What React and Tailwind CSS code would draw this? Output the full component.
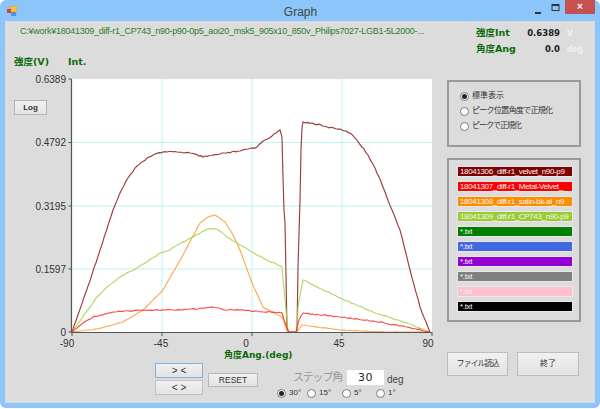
import React from 'react'

const sans = 'font-["Liberation_Sans","Noto_Sans_CJK_JP",sans-serif]'

// curves in page pixels, plot runs x 72-432 and y 79-332
const curves = [
  { color: '#8b1a1a', amp: 0.7, pts: [[72,332],[86,292],[100,250],[113,210],[120,193],[128,178],[135,168],[147,158],[155,154],[163,152],[177,152],[190,153],[203,157],[220,154],[240,151],[257,147],[263,141],[272,136],[280,130],[282,137],[283,177],[284,210],[285,223],[287,330],[288,332],[297,332],[298,267],[300,200],[301,150],[302,128],[303,122],[312,123],[327,127],[340,129],[350,133],[357,140],[368,155],[375,168],[383,187],[392,210],[400,230],[410,270],[420,307],[430,332]] },
  { color: '#ff9a30', amp: 0.25, pts: [[72,332],[97,329],[123,322],[143,310],[163,290],[183,255],[200,223],[208,217],[215,215],[225,222],[233,235],[240,250],[252,283],[263,307],[282,317],[287,330],[288,332],[297,332],[302,325],[340,330],[387,332],[430,332]] },
  { color: '#a3d14a', amp: 0.5, pts: [[72,332],[97,297],[107,287],[120,277],[137,268],[160,253],[170,250],[177,245],[193,237],[208,229],[217,229],[228,238],[240,245],[252,252],[263,258],[282,267],[285,300],[288,330],[289,332],[297,332],[298,307],[303,280],[340,298],[373,312],[407,323],[430,332]] },
  { color: '#ff2a2a', amp: 0.5, pts: [[72,332],[83,323],[93,317],[113,312],[143,310],[173,310],[198,309],[213,307],[225,310],[240,310],[282,313],[287,328],[289,332],[296,332],[299,320],[303,313],[340,317],[373,321],[407,327],[430,332]] },
]

const wobble = (pts, amp) => {
  const out = []
  let n = 0
  pts.forEach((p, i) => {
    const next = pts[i + 1]
    if (!next) { out.push(p); return }
    const steps = Math.max(1, Math.floor((next[0] - p[0]) / 2))
    for (let s = 0; s < steps; s++) {
      n++
      const r = Math.sin(n * 12.9898) * 43758.5453
      const jitter = (r - Math.floor(r) - 0.5) * 2 * amp
      const y = p[1] + (next[1] - p[1]) * s / steps + (s === 0 ? 0 : jitter)
      out.push([p[0] + (next[0] - p[0]) * s / steps, Math.min(y, 332)])
    }
  })
  return out.map(p => p[0].toFixed(1) + ',' + p[1].toFixed(1)).join(' ')
}

const yTicks = [['0.6389', 79], ['0.4792', 142.5], ['0.3195', 206], ['0.1597', 269], ['0', 332]]
const xTicks = [['-90', 72, 67], ['-45', 162, 161], ['0', 252, 246], ['45', 342, 339], ['90', 432, 428]]

const files = [
  ['18041306_diff-r1_velvet_n90-p9', 'bg-[#800000]'],
  ['18041307_diff-r1_Metal-Velvet_', 'bg-[#ff0000]'],
  ['18041308_diff-r1_satin-bk-al_n9', 'bg-[#ff8c00]'],
  ['18041309_diff-r1_CP743_n90-p9', 'bg-[#9acd32]'],
  ['*.txt', 'bg-[#008000]'],
  ['*.txt', 'bg-[#4169e1]'],
  ['*.txt', 'bg-[#9400d3]'],
  ['*.txt', 'bg-[#808080]'],
  ['*.txt', 'bg-[#ffc0cb]'],
  ['*.txt', 'bg-[#000000]'],
]

function Radio({ on, label, className = '' }) {
  return (
    <div className={'flex items-center gap-[3px] whitespace-nowrap ' + className}>
      <span className="w-[9px] h-[9px] rounded-full border border-[#7a7a7a] bg-white flex items-center justify-center shrink-0">
        {on && <span className="w-[5px] h-[5px] rounded-full bg-[#222]" />}
      </span>
      <span>{label}</span>
    </div>
  )
}

function Btn({ children, className = '' }) {
  return (
    <button className={'border bg-gradient-to-b from-[#f1f1f1] to-[#e3e3e3] text-[#333] flex items-center justify-center whitespace-nowrap ' + className}>
      {children}
    </button>
  )
}

function Chart() {
  return (
    <svg viewBox="5 75 437 275" className="w-[437px] h-[275px] block">
      <rect x="72" y="79" width="360" height="253" fill="#fff" />
      {[162, 252, 342].map(x => <line key={x} x1={x} x2={x} y1="79" y2="332" stroke="#bff3f3" />)}
      {[142.5, 206, 269].map(y => <line key={y} x1="72" x2="432" y1={y} y2={y} stroke="#bff3f3" />)}
      {curves.map(c => (
        <polyline key={c.color} points={wobble(c.pts, c.amp)} fill="none" stroke={c.color} strokeWidth="1.15" strokeOpacity="0.85" />
      ))}
      <path d="M71.5 79V332.5H432" fill="none" stroke="#555" strokeWidth="1.2" />
      {yTicks.map(([t, y]) => (
        <g key={t}>
          <line x1="68.5" x2="71.5" y1={y} y2={y} stroke="#555" />
          <text x="66" y={y + 3.5} textAnchor="end" fontSize="10" fill="#333" fontFamily="Liberation Sans, sans-serif">{t}</text>
        </g>
      ))}
      {xTicks.map(([t, x, lx]) => (
        <g key={t}>
          <line x1={x} x2={x} y1="332" y2="336" stroke="#555" />
          <text x={lx} y="347" textAnchor="middle" fontSize="10" fill="#333" fontFamily="Liberation Sans, sans-serif">{t}</text>
        </g>
      ))}
    </svg>
  )
}

export default function App() {
  return (
    <div className={'w-[600px] h-[409px] bg-white overflow-hidden ' + sans}>
      <div className="h-[408px] rounded-[6px] bg-[#8bc5f9] flex flex-col px-[5px] pb-[5px]">
        {/* title bar */}
        <div className="h-[21px] shrink-0 flex items-start">
          <svg width="10" height="10" viewBox="0 0 10 10" className="mt-[6px] ml-[2px]">
            <rect x="3" y="0" width="7" height="6" fill="#f4c542" stroke="#b08a20" strokeWidth="0.5" />
            <rect x="0" y="3" width="4" height="4" fill="#d8403a" />
            <rect x="4" y="6" width="5" height="4" fill="#5b8fd8" />
          </svg>
          <span className="flex-1 text-center text-[12px] text-[#444] mt-[3px] pl-[50px]">Graph</span>
          <svg width="10" height="10" viewBox="0 0 10 10" className="mt-[5px] mr-[7px]">
            <rect x="1" y="7" width="6" height="2" fill="#333" />
          </svg>
          <svg width="10" height="10" viewBox="0 0 10 10" className="mt-[3px] mr-[4px]">
            <rect x="1" y="1.5" width="7" height="6" fill="none" stroke="#333" strokeWidth="1" />
            <rect x="1" y="1" width="7" height="2" fill="#333" />
          </svg>
          <div className="w-[30px] h-[14px] bg-[#c75050] flex items-center justify-center">
            <span className="text-white text-[10px] leading-none font-bold">×</span>
          </div>
        </div>

        {/* client area */}
        <div className="flex-1 bg-[#dcdcdc] flex flex-col">
          <div className="h-[34px] shrink-0 flex">
            <div className="w-[471px] pl-[15px] pt-[4px] text-[9px] tracking-[-0.26px] leading-[12px] text-[#2c7d2c] whitespace-nowrap overflow-hidden">
              C:¥work¥18041309_diff-r1_CP743_n90-p90-0p5_aoi20_msk5_905x10_850v_Philips7027-LGB1-5L2000-...
            </div>
            <div className="flex-1 pt-[4px] leading-[16px] font-bold">
              <div className="flex items-center">
                <span className="text-[#0b6b0b] w-[51px] font-['DejaVu_Sans','Noto_Sans_CJK_JP',sans-serif] text-[9.5px]">強度Int</span>
                <span className="w-[33px] text-right text-[#222] font-['DejaVu_Sans',sans-serif] text-[8.5px]">0.6389</span>
                <span className="ml-[7px] text-[#f4f4f4] text-[9px]">V</span>
              </div>
              <div className="flex items-center">
                <span className="text-[#0b6b0b] w-[51px] font-['DejaVu_Sans','Noto_Sans_CJK_JP',sans-serif] text-[9.5px]">角度Ang</span>
                <span className="w-[33px] text-right text-[#222] font-['DejaVu_Sans',sans-serif] text-[8.5px]">0.0</span>
                <span className="ml-[7px] text-[#f4f4f4] text-[9px]">deg</span>
              </div>
            </div>
          </div>

          <div className="flex-1 flex">
            {/* left column */}
            <div className="w-[437px] relative flex flex-col">
              <div className="h-[20px] pl-[9px] flex items-start text-[9.5px] leading-[14px] font-bold text-[#0b6b0b] font-['DejaVu_Sans','Noto_Sans_CJK_JP',sans-serif]">
                <span className="w-[54px]">強度(V)</span>
                <span>Int.</span>
              </div>
              <Chart />
              <div className="h-[13px] pl-[219px] -mt-[1px] text-[9px] leading-[13px] font-bold text-[#0b6b0b] font-['DejaVu_Sans','Noto_Sans_CJK_JP',sans-serif] whitespace-nowrap">
                角度Ang.(deg)
              </div>
              <div className="flex pl-[150px] pt-[1px] text-[#333]">
                <div className="flex flex-col gap-[2px] w-[48px]">
                  <Btn className="h-[15px] border-[#7db2e6] text-[10px]">&gt; &lt;</Btn>
                  <Btn className="h-[15px] border-[#c0c0c0] text-[10px]">&lt; &gt;</Btn>
                </div>
                <Btn className="w-[50px] h-[14px] mt-[10px] ml-[5px] border-[#b8b8b8] text-[8.5px]">RESET</Btn>
                <div className="ml-[35px] pt-[4px] flex flex-col">
                  <div className="flex items-center h-[21px]">
                    <span className="text-[11px] tracking-[-1.2px] text-[#999] w-[54px] whitespace-nowrap">ステップ角</span>
                    <div className="w-[37px] h-[15px] bg-white text-center text-[11px] leading-[15px] tracking-[0.5px] text-[#222] font-['DejaVu_Sans',sans-serif]">30</div>
                    <span className="text-[10px] ml-[3px] text-[#444] mt-[3px]">deg</span>
                  </div>
                  <div className="flex items-center -ml-[16px] text-[8px] leading-[10px] text-[#333]">
                    <Radio on label="30°" className="w-[30px]" />
                    <Radio label="15°" className="w-[35px]" />
                    <Radio label="5°" className="w-[34px]" />
                    <Radio label="1°" />
                  </div>
                </div>
              </div>
              <Btn className="absolute left-[9px] top-[45px] w-[33px] h-[15px] border-[#b5b5b5] text-[8px] font-bold">Log</Btn>
            </div>

            {/* right column */}
            <div className="flex-1 pl-[5px] pt-[25px] flex flex-col w-[153px]">
              <div className="w-[134px] h-[67px] border-2 border-[#9a9a9a] pl-[11px] pt-[9px] flex flex-col gap-[5px] text-[8px] leading-[10px] text-[#333]">
                <Radio on label="標準表示" />
                <Radio label="ピーク位置角度で正規化" className="tracking-[-0.7px]" />
                <Radio label="ピークで正規化" className="tracking-[-1px]" />
              </div>
              <div className="w-[134px] h-[164px] mt-[11px] border-2 border-[#9a9a9a] pl-[9px] pt-[7px] flex flex-col gap-[6px]">
                {files.map(([name, bg], i) => (
                  <div key={i} className={'w-[114px] h-[9px] text-[8px] tracking-[-0.35px] leading-[9px] text-[#f5f5f5] pl-[2px] whitespace-nowrap overflow-hidden shadow-[0_0_0_1px_#e8e8e8] ' + bg}>
                    {name}
                  </div>
                ))}
              </div>
              <div className="flex gap-[9px] mt-[30px]">
                <Btn className="w-[61px] h-[24px] border-[#bdbdbd] text-[8px] tracking-[-1px]">ファイル読込</Btn>
                <Btn className="w-[62px] h-[24px] border-[#bdbdbd] text-[8px]">終了</Btn>
              </div>
            </div>
          </div>
        </div>
      </div>
    </div>
  )
}
